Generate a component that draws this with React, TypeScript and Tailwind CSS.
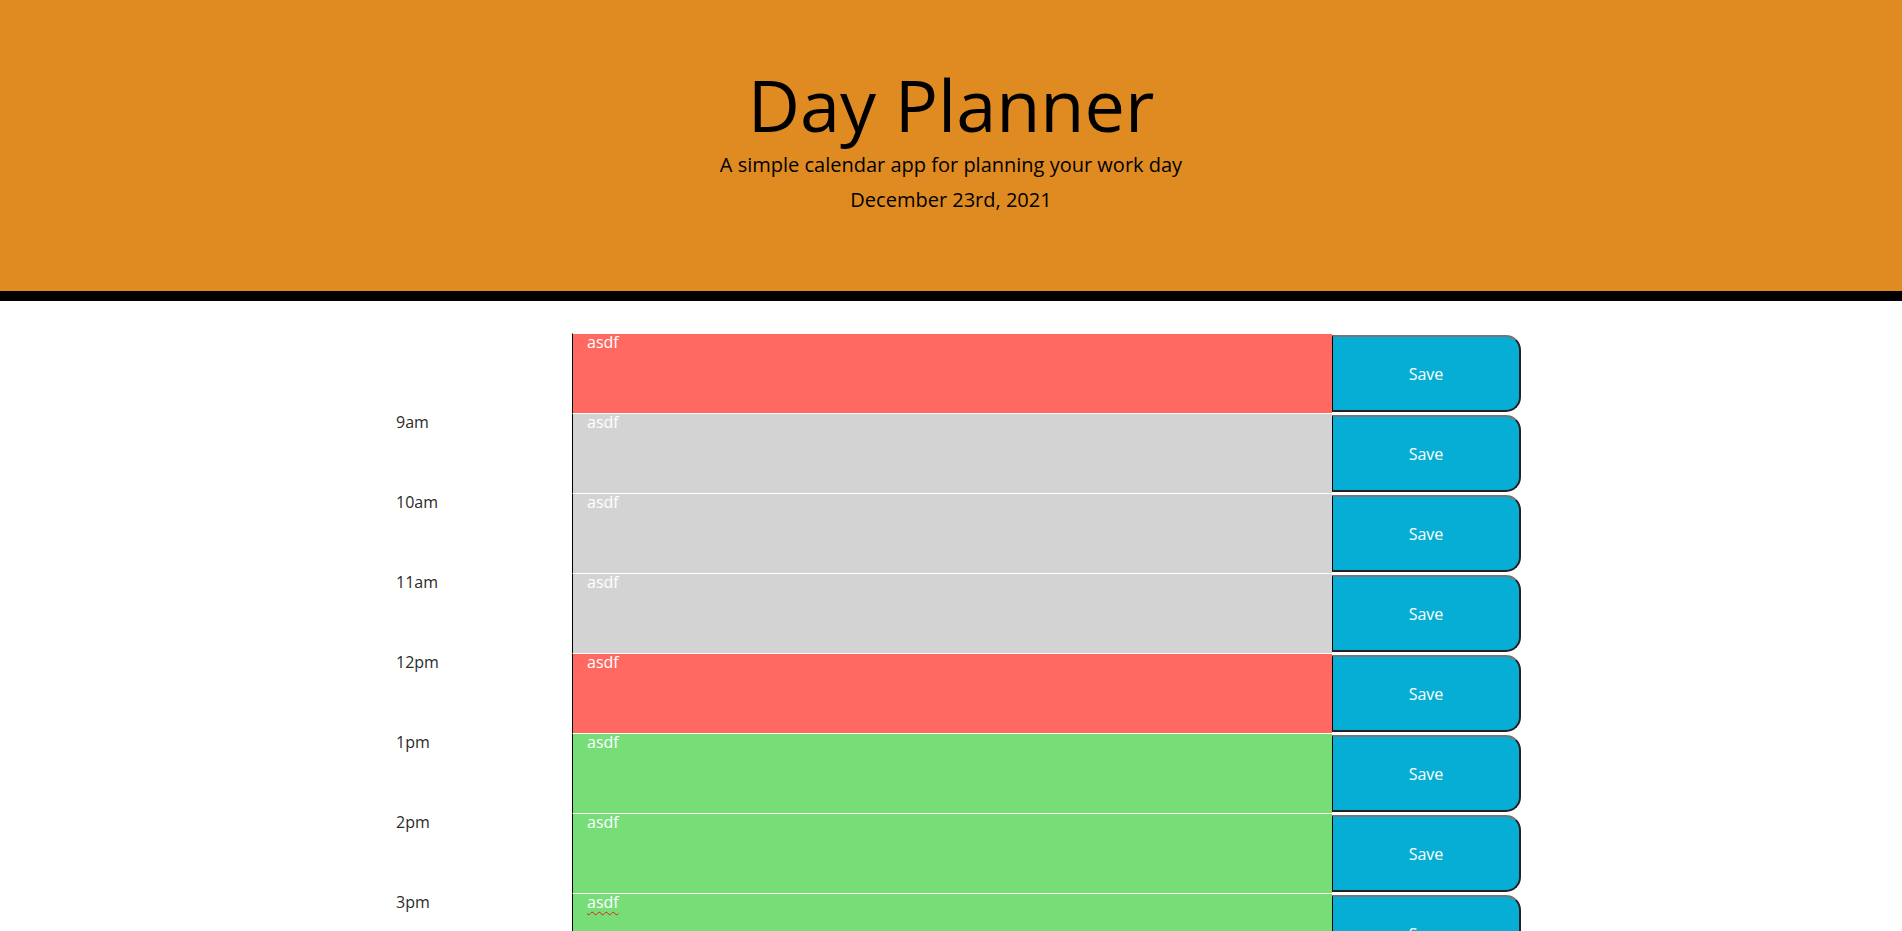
import { useState } from "react";

type Slot = {
  label: string;
  state: "past" | "present" | "future";
  text: string;
};

const SLOTS: Slot[] = [
  { label: "", state: "present", text: "asdf" },
  { label: "9am", state: "past", text: "asdf" },
  { label: "10am", state: "past", text: "asdf" },
  { label: "11am", state: "past", text: "asdf" },
  { label: "12pm", state: "present", text: "asdf" },
  { label: "1pm", state: "future", text: "asdf" },
  { label: "2pm", state: "future", text: "asdf" },
  { label: "3pm", state: "future", text: "asdf" },
  { label: "4pm", state: "future", text: "" },
  { label: "5pm", state: "future", text: "" },
];

const STATE_BG = {
  past: "bg-[#d3d3d3]",
  present: "bg-[#ff6961]",
  future: "bg-[#77dd77]",
};

function TimeBlock({ slot, focused }: { slot: Slot; focused: boolean }) {
  const [value, setValue] = useState(slot.text);

  return (
    <div className="flex h-[80px]">
      {/* Hour */}
      <div className="w-[191px] shrink-0 pl-[15px] pt-[1px] text-[16px] leading-4 text-[#2b2b2b]">
        {slot.label}
      </div>

      {/* Event text */}
      <textarea
        value={value}
        onChange={(e) => setValue(e.target.value)}
        spellCheck={false}
        className={`w-[760px] shrink-0 h-full resize-none border-0 border-t border-t-white border-l border-l-black pl-[14px] pt-0 text-[16px] leading-4 text-white outline-none ${STATE_BG[slot.state]} ${
          focused ? "underline decoration-wavy decoration-[#e02020] decoration-1 underline-offset-[3px]" : ""
        }`}
      />

      {/* Save */}
      <button className="w-[189px] shrink-0 h-[77px] mt-[2px] bg-[#06aed5] text-white text-[16px] rounded-tr-[15px] rounded-br-[15px] border-2 border-t-[#767676] border-r-[#222] border-b-[#222] border-l border-l-black">
        Save
      </button>
    </div>
  );
}

export default function App() {
  return (
    <div className="min-h-screen bg-white font-['Open_Sans',sans-serif]">
      {/* Header */}
      <header className="h-[301px] bg-[#df8b22] border-b-[10px] border-black text-center text-black pt-[61px]">
        <h1 className="text-[72px] leading-[86px] font-normal">Day Planner</h1>
        <p className="mt-[3px] text-[20px] leading-[30px]">
          A simple calendar app for planning your work day
        </p>
        <p className="mt-[5px] text-[20px] leading-[30px]">December 23rd, 2021</p>
      </header>

      {/* Time blocks */}
      <div className="w-[1140px] mx-auto mt-[32px]">
        {SLOTS.map((slot, i) => (
          <TimeBlock key={i} slot={slot} focused={slot.label === "3pm"} />
        ))}
      </div>
    </div>
  );
}
